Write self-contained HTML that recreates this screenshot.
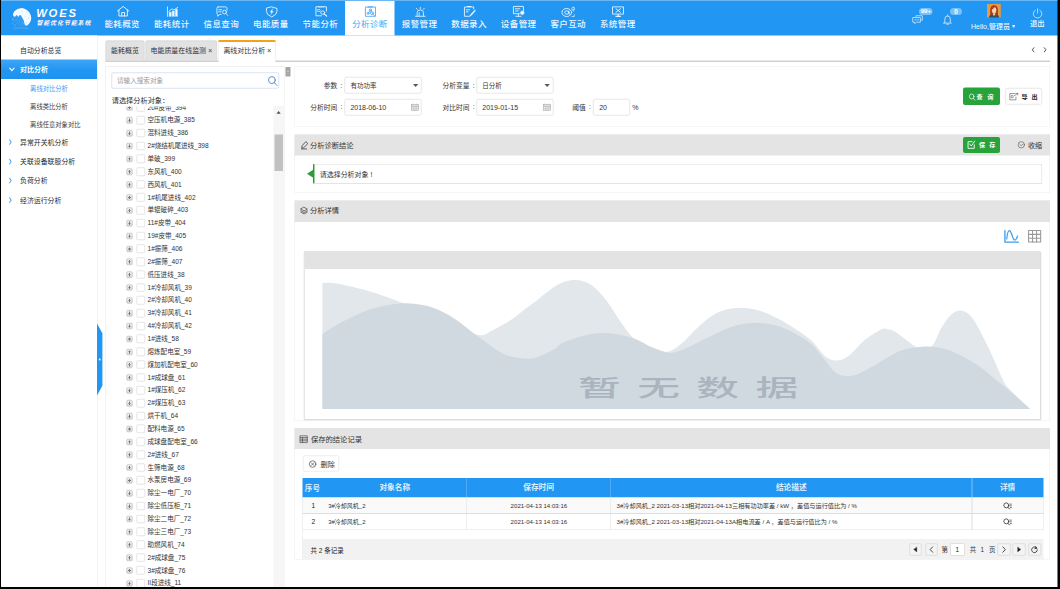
<!DOCTYPE html>
<html lang="zh-CN"><head><meta charset="utf-8"><title>WOES 智能优化节能系统</title>
<style>
html,body{margin:0;padding:0;width:1060px;height:589px;overflow:hidden;background:#fff;}
#root{position:absolute;left:0;top:0;width:2120px;height:1178px;transform:scale(0.5);transform-origin:0 0;overflow:hidden;background:#fff;font-family:"Liberation Sans","Noto Sans CJK SC",sans-serif;}
#root div,#root svg{position:absolute;}
#root svg{overflow:visible;display:block;}
.t{white-space:nowrap;}
</style></head><body>
<div id="root">
<div style="left:0px;top:0px;width:2120px;height:70.6px;background:#2196f3;"></div>
<div style="left:0px;top:0px;width:2120px;height:1.8px;background:#6ab7f5;"></div>
<svg style="left:16px;top:8px;width:60px;height:56px;" viewBox="0 0 631 589" preserveAspectRatio="none"><path d="M105 232 Q108 190 135 155 Q190 92 290 82 Q385 92 450 178 Q492 240 490 300 Q486 370 440 420 Q410 452 378 456 Q352 448 346 410 Q338 360 322 328 Q300 290 272 242 Q255 228 240 236 L216 272 L196 240 Q184 230 172 238 L150 266 Q132 270 120 258 Z" fill="#fff" opacity=".96"/>
<path d="M100 300 Q96 330 104 350 M88 400 Q120 440 165 462 M300 380 L320 410" stroke="#fff" stroke-opacity=".35" stroke-width="14" fill="none" stroke-linecap="round"/>
<path d="M105 505 Q270 470 440 505 M130 525 Q280 500 420 522" stroke="#fff" stroke-opacity=".22" stroke-width="12" fill="none" stroke-linecap="round"/>
<circle cx="292" cy="272" r="192" fill="#fff" opacity=".06"/>
<g fill="#2196f3" opacity=".16"><circle cx="400" cy="170" r="16"/><circle cx="430" cy="300" r="20"/><circle cx="300" cy="160" r="14"/><circle cx="395" cy="390" r="16"/><circle cx="210" cy="170" r="12"/><circle cx="355" cy="260" r="12"/></g></svg>
<div class="t" style="left:72.4px;top:8.32px;height:36.16px;line-height:36.16px;font-size:22.6px;color:#fff;font-weight:bold;font-style:italic;letter-spacing:3.5px;text-shadow:0.6px 0.8px 1px rgba(120,80,200,.45);">WOES</div>
<div class="t" style="left:72.8px;top:37.2px;height:19.2px;line-height:19.2px;font-size:12px;color:#fff;font-weight:bold;font-style:italic;letter-spacing:1.72px;text-shadow:0.4px 0.6px 0.8px rgba(120,60,200,.55);">智能优化节能系统</div>
<svg style="left:234px;top:12.4px;width:24.6px;height:20.8px;color:#fff;opacity:.93;" viewBox="1.75 2.25 20.5 19.0" preserveAspectRatio="none"><g fill="none" stroke="currentColor" stroke-width="1.6" stroke-linecap="round" stroke-linejoin="round"><path d="M2.5 11.5 L12 3 L21.5 11.5 M5 9.6 V20.5 H19 V9.6 M9.6 20.5 V14.2 H14.4 V20.5" /></g></svg>
<div class="t" style="left:-155.64px;width:800px;text-align:center;top:35px;height:27.2px;line-height:27.2px;font-size:17px;color:#fff;font-weight:500;letter-spacing:0.8px;opacity:.93;">能耗概览</div>
<svg style="left:334px;top:13px;width:22.6px;height:20.2px;color:#fff;opacity:.93;" viewBox="1.75 0.75 19.5 20.75" preserveAspectRatio="none"><g fill="none" stroke="currentColor" stroke-width="1.6" stroke-linecap="round" stroke-linejoin="round"><path d="M2.5 1.5 V21" /><path d="M5.5 21 V12.5 H9 V21 Z M10.8 21 V10 H14.3 V21 Z M16.2 21 V6.5 H19.7 V21 Z" fill="currentColor" stroke-width=".8"/><path d="M5 10.5 L10.5 5.5 L13.5 8 L20.5 2.5" /></g></svg>
<div class="t" style="left:-56.52px;width:800px;text-align:center;top:35px;height:27.2px;line-height:27.2px;font-size:17px;color:#fff;font-weight:500;letter-spacing:0.8px;opacity:.93;">能耗统计</div>
<svg style="left:432.6px;top:13px;width:23.4px;height:20.2px;color:#fff;opacity:.93;" viewBox="1.25 1.75 21.5 19.5" preserveAspectRatio="none"><g fill="none" stroke="currentColor" stroke-width="1.6" stroke-linecap="round" stroke-linejoin="round"><path d="M4 2.5 H18 Q20.5 2.5 20.5 5 V9 M10 17 H7.5 L3.5 20.5 V17 Q2 16.5 2 14.5 V5 Q2 2.5 4.5 2.5" /><path d="M5.5 8 H11 M5.5 12 H9.5" /><circle cx="16" cy="12.5" r="3.6"/><path d="M18.6 15.4 L22 19.2" /></g></svg>
<div class="t" style="left:42.6px;width:800px;text-align:center;top:35px;height:27.2px;line-height:27.2px;font-size:17px;color:#fff;font-weight:500;letter-spacing:0.8px;opacity:.93;">信息查询</div>
<svg style="left:531.8px;top:13px;width:22.8px;height:21.6px;color:#fff;opacity:.93;" viewBox="2.25 1.25 19.5 21.0" preserveAspectRatio="none"><g fill="none" stroke="currentColor" stroke-width="1.6" stroke-linecap="round" stroke-linejoin="round"><path d="M12 2 L21 5 V11 Q21 17.5 12 21.5 Q3 17.5 3 11 V5 Z" /><path d="M13.6 5.8 L9.2 12.2 H12 L10.6 17 L15 10.6 H12.2 Z" fill="currentColor" stroke-width=".5"/></g></svg>
<div class="t" style="left:141.72px;width:800px;text-align:center;top:35px;height:27.2px;line-height:27.2px;font-size:17px;color:#fff;font-weight:500;letter-spacing:0.8px;opacity:.93;">电能质量</div>
<svg style="left:630.6px;top:12.4px;width:23.6px;height:21.4px;color:#fff;opacity:.93;" viewBox="2.25 1 20.25 21.3" preserveAspectRatio="none"><g fill="none" stroke="currentColor" stroke-width="1.6" stroke-linecap="round" stroke-linejoin="round"><path d="M8 2.5 H3 V20.5 H12.5 M16 2.5 H21 V11" /><path d="M8 1.8 H16 V3.6 H8 Z" fill="currentColor" stroke-width=".6"/><path d="M6 8 H10 V12 H6 Z" stroke-width="1.1"/><circle cx="14.6" cy="14.2" r="3.4"/><path d="M17 16.8 L21.5 21.3" stroke-width="2"/></g></svg>
<div class="t" style="left:240.84px;width:800px;text-align:center;top:35px;height:27.2px;line-height:27.2px;font-size:17px;color:#fff;font-weight:500;letter-spacing:0.8px;opacity:.93;">节能分析</div>
<div style="left:690.2px;top:1.8px;width:99.12px;height:69.4px;background:#fff;"></div>
<svg style="left:730px;top:12.4px;width:21.8px;height:21.4px;color:#45a6f5;" viewBox="2.25 1 19.5 20.25" preserveAspectRatio="none"><g fill="none" stroke="currentColor" stroke-width="1.6" stroke-linecap="round" stroke-linejoin="round"><path d="M8 3 H3 V20.5 H21 V3 H16" /><path d="M8 1.8 H16 V4 H8 Z" fill="currentColor" stroke-width=".6"/><circle cx="12" cy="8.6" r="1.9"/><circle cx="7.6" cy="15" r="1.7"/><circle cx="14.6" cy="14.6" r="2.6"/><path d="M10.8 10.2 L8.6 13.6 M12.8 10.4 L13.8 12.2 M16.5 16.6 L19.5 19.6" /></g></svg>
<div class="t" style="left:339.96px;width:800px;text-align:center;top:35px;height:27.2px;line-height:27.2px;font-size:17px;color:#45a6f5;font-weight:400;letter-spacing:0.8px;">分析诊断</div>
<svg style="left:829.6px;top:14px;width:21.2px;height:19.2px;color:#fff;opacity:.93;" viewBox="2.75 0.5 18.5 21.0" preserveAspectRatio="none"><g fill="none" stroke="currentColor" stroke-width="1.6" stroke-linecap="round" stroke-linejoin="round"><path d="M6.5 20.5 V12.5 Q6.5 7 12 7 Q17.5 7 17.5 12.5 V20.5 M3.5 20.8 H20.5 M12 1.2 V4.2 M5 3.2 L7 5.8 M19 3.2 L17 5.8" /><path d="M10 20.5 V13" /></g></svg>
<div class="t" style="left:439.08px;width:800px;text-align:center;top:35px;height:27.2px;line-height:27.2px;font-size:17px;color:#fff;font-weight:500;letter-spacing:0.8px;opacity:.93;">报警管理</div>
<svg style="left:928px;top:12.4px;width:23.8px;height:21.4px;color:#fff;opacity:.93;" viewBox="2.75 0.6 20.45 20.7" preserveAspectRatio="none"><g fill="none" stroke="currentColor" stroke-width="1.6" stroke-linecap="round" stroke-linejoin="round"><path d="M19.5 6.5 V2.5 H3.5 V20.5 H12" /><path d="M9 1.6 H14.5" stroke-width="2"/><path d="M6.5 8 H12.5 M6.5 12 H10" /><path d="M21.2 8.2 L13.6 17.6 L12.2 20.6 L15.2 19.2 L22.6 9.6 Z" fill="currentColor" stroke-width=".6"/></g></svg>
<div class="t" style="left:538.2px;width:800px;text-align:center;top:35px;height:27.2px;line-height:27.2px;font-size:17px;color:#fff;font-weight:500;letter-spacing:0.8px;opacity:.93;">数据录入</div>
<svg style="left:1026.4px;top:12.4px;width:23.4px;height:21.4px;color:#fff;opacity:.93;" viewBox="2.25 1.75 20.95 19.75" preserveAspectRatio="none"><g fill="none" stroke="currentColor" stroke-width="1.6" stroke-linecap="round" stroke-linejoin="round"><path d="M21 11 V2.5 H3 V16 H13.5 M12 16 V20.5 M7.5 20.8 H16.5" /><path d="M6.5 7 H14.5 M6.5 11 H11.5" /><circle cx="18.8" cy="14.4" r="2.6" fill="currentColor"/><path d="M18.8 10.6 V18.2 M15 14.4 H22.6 M16.2 11.8 L21.4 17 M21.4 11.8 L16.2 17" stroke-width="1"/></g></svg>
<div class="t" style="left:637.32px;width:800px;text-align:center;top:35px;height:27.2px;line-height:27.2px;font-size:17px;color:#fff;font-weight:500;letter-spacing:0.8px;opacity:.93;">设备管理</div>
<svg style="left:1122.6px;top:13px;width:26.8px;height:20.8px;color:#fff;opacity:.93;" viewBox="0.75 0.6 22.15 20.7" preserveAspectRatio="none"><g fill="none" stroke="currentColor" stroke-width="1.6" stroke-linecap="round" stroke-linejoin="round"><circle cx="9.5" cy="12.5" r="8" /><circle cx="9.5" cy="12.5" r="3.4" /><path d="M12.9 9.4 V14 Q12.9 16 14.8 16" /><path d="M18.6 3 H22.2 V7.4 H18.6 Z M20.4 1.2 V3 M20.4 7.4 V10.2" stroke-width="1.1"/><path d="M18.2 20.5 H21.8 V16.6" stroke-width="1.2"/></g></svg>
<div class="t" style="left:736.44px;width:800px;text-align:center;top:35px;height:27.2px;line-height:27.2px;font-size:17px;color:#fff;font-weight:500;letter-spacing:0.8px;opacity:.93;">客户互动</div>
<svg style="left:1225.2px;top:13px;width:22.8px;height:20.8px;color:#fff;opacity:.93;" viewBox="1.75 1.75 20.5 20.15" preserveAspectRatio="none"><g fill="none" stroke="currentColor" stroke-width="1.6" stroke-linecap="round" stroke-linejoin="round"><path d="M2.5 2.5 H21.5 V16.5 H2.5 Z M12 16.5 V20.2 M7.5 20.8 H16.5" /><path d="M8 6 L16 13 M16 6 L8 13" stroke-width="1.7"/><path d="M9.5 20.8 H14.5" stroke-width="2.2"/></g></svg>
<div class="t" style="left:835.56px;width:800px;text-align:center;top:35px;height:27.2px;line-height:27.2px;font-size:17px;color:#fff;font-weight:500;letter-spacing:0.8px;opacity:.93;">系统管理</div>
<svg style="left:1825px;top:29.4px;width:21px;height:19.4px;color:#fff;opacity:.9;" viewBox="0 0 24 24" preserveAspectRatio="none"><g fill="none" stroke="currentColor" stroke-width="1.7" stroke-linecap="round" stroke-linejoin="round"><path d="M8 5 V3 H22.5 V14 H19.5"/><path d="M1.5 7.5 H18 V19 H9 L5 22.5 V19 H1.5 Z"/><path d="M6 13.2 H7 M9.5 13.2 H10.5 M13 13.2 H14"/></g></svg>
<div style="left:1838.4px;top:16.2px;width:26.6px;height:13.4px;background:#7dbff7;border-radius:7.2px;"></div>
<div class="t" style="left:1451.8px;width:800px;text-align:center;top:13.08px;height:19.84px;line-height:19.84px;font-size:12.4px;color:#fff;font-weight:bold;">99+</div>
<svg style="left:1884.6px;top:27.6px;width:20.4px;height:21.8px;color:#fff;opacity:.9;" viewBox="0 0 24 24" preserveAspectRatio="none"><g fill="none" stroke="currentColor" stroke-width="1.7" stroke-linecap="round" stroke-linejoin="round"><path d="M12 2 V4 M5.5 18 V11 Q5.5 4.5 12 4.5 Q18.5 4.5 18.5 11 V18 L21 20 H3 Z M9.8 22.5 H14.2"/></g></svg>
<div style="left:1899.6px;top:16.2px;width:24.8px;height:13.4px;background:#7dbff7;border-radius:7.2px;"></div>
<div class="t" style="left:1512px;width:800px;text-align:center;top:12.92px;height:20.16px;line-height:20.16px;font-size:12.6px;color:#fff;font-weight:bold;">0</div>
<svg style="left:1974.2px;top:7.6px;width:27.4px;height:27px;border-radius:1.6px;" viewBox="0 0 30 28" preserveAspectRatio="none"><rect width="30" height="28" fill="#e6a650"/><rect x="0" y="0" width="30" height="28" fill="#d98a2b" opacity=".35"/>
<path d="M7 28 V13 Q7 2.5 15.5 2.5 Q24 2.5 24 13 V28 Z" fill="#b23a1c"/>
<path d="M10.5 12 Q10.5 6.5 15.5 7 Q20.5 6.5 20.5 12 Q20.5 19.5 15.5 20 Q10.5 19.5 10.5 12Z" fill="#f6d3ad"/>
<path d="M9.5 12.5 Q10 6 16 6.5 Q14 10 9.5 12.5Z" fill="#a83218"/>
<path d="M4 28 Q5 22.5 12 22 L15.5 24 L19 22 Q26 22.5 27 28Z" fill="#3f4f63"/>
<path d="M13 19.5 H18 V23 L15.5 24.5 L13 23Z" fill="#f0c79d"/></svg>
<div class="t" style="left:1942px;top:41px;height:22.4px;line-height:22.4px;font-size:14px;color:#fff;font-weight:500;opacity:.95;white-space:nowrap;">Hello,管理员 <span style="font-size:11px;vertical-align:0.6px">▾</span></div>
<svg style="left:2064.4px;top:16.4px;width:22.2px;height:21.8px;color:#fff;opacity:.95;" viewBox="0 0 24 24" preserveAspectRatio="none"><g fill="none" stroke="currentColor" stroke-width="1.5" stroke-linecap="round" stroke-linejoin="round"><path d="M12 1.8 V11.5"/><path d="M7.3 4.6 A9.3 9.3 0 1 0 16.7 4.6"/></g></svg>
<div class="t" style="left:1674.4px;width:800px;text-align:center;top:34.92px;height:23.36px;line-height:23.36px;font-size:14.6px;color:#fff;font-weight:500;opacity:.95;">退出</div>
<div style="left:0px;top:70.6px;width:194.4px;height:1107.4px;background:#fff;"></div>
<div style="left:194px;top:70.6px;width:1px;height:1107.4px;background:#e4e4e4;"></div>
<div class="t" style="left:40px;top:89.56px;height:22.08px;line-height:22.08px;font-size:13.8px;color:#2b2b2b;">自动分析总览</div>
<div style="left:0px;top:118.6px;width:194.4px;height:39.2px;background:linear-gradient(#3fa5f6,#2196f3 55%,#1e92ef);"></div>
<svg style="left:18.4px;top:133px;width:11.6px;height:11.6px;color:#fff;" viewBox="0 0 24 24" preserveAspectRatio="none"><g fill="none" stroke="currentColor" stroke-width="4.6" stroke-linecap="round" stroke-linejoin="round"><path d="M3 7 L12 17 L21 7"/></g></svg>
<div class="t" style="left:40px;top:127.2px;height:22.4px;line-height:22.4px;font-size:14px;color:#fff;font-weight:bold;">对比分析</div>
<div class="t" style="left:60.2px;top:166.72px;height:20.16px;line-height:20.16px;font-size:12.6px;color:#3a9cf0;">离线对比分析</div>
<div class="t" style="left:60.2px;top:202.52px;height:20.16px;line-height:20.16px;font-size:12.6px;color:#3c3c3c;">离线类比分析</div>
<div class="t" style="left:60.2px;top:239.52px;height:20.16px;line-height:20.16px;font-size:12.6px;color:#3c3c3c;">离线任意对象对比</div>
<svg style="left:17.2px;top:278.4px;width:7.6px;height:12.4px;color:#2f98f2;" viewBox="0 0 24 24" preserveAspectRatio="none"><g fill="none" stroke="currentColor" stroke-width="4.4" stroke-linecap="round" stroke-linejoin="round"><path d="M7 3 L17 12 L7 21"/></g></svg>
<div class="t" style="left:40px;top:273.96px;height:22.08px;line-height:22.08px;font-size:13.8px;color:#2b2b2b;">异常开关机分析</div>
<svg style="left:17.2px;top:316.8px;width:7.6px;height:12.4px;color:#2f98f2;" viewBox="0 0 24 24" preserveAspectRatio="none"><g fill="none" stroke="currentColor" stroke-width="4.4" stroke-linecap="round" stroke-linejoin="round"><path d="M7 3 L17 12 L7 21"/></g></svg>
<div class="t" style="left:40px;top:312.36px;height:22.08px;line-height:22.08px;font-size:13.8px;color:#2b2b2b;">关联设备联股分析</div>
<svg style="left:17.2px;top:355px;width:7.6px;height:12.4px;color:#2f98f2;" viewBox="0 0 24 24" preserveAspectRatio="none"><g fill="none" stroke="currentColor" stroke-width="4.4" stroke-linecap="round" stroke-linejoin="round"><path d="M7 3 L17 12 L7 21"/></g></svg>
<div class="t" style="left:40px;top:350.56px;height:22.08px;line-height:22.08px;font-size:13.8px;color:#2b2b2b;">负荷分析</div>
<svg style="left:17.2px;top:394.4px;width:7.6px;height:12.4px;color:#2f98f2;" viewBox="0 0 24 24" preserveAspectRatio="none"><g fill="none" stroke="currentColor" stroke-width="4.4" stroke-linecap="round" stroke-linejoin="round"><path d="M7 3 L17 12 L7 21"/></g></svg>
<div class="t" style="left:40px;top:389.96px;height:22.08px;line-height:22.08px;font-size:13.8px;color:#2b2b2b;">经济运行分析</div>
<svg style="left:194.4px;top:647px;width:10.8px;height:144px;" viewBox="0 0 10 132" preserveAspectRatio="none"><path d="M0 0 L10 18 V114 L0 132Z" fill="#2196f3"/><circle cx="5" cy="66" r="1.8" fill="#fff"/></svg>
<div style="left:210.8px;top:120.6px;width:1888.8px;height:3.2px;background:#d0d0d0;"></div>
<div style="left:211.2px;top:80.6px;width:78px;height:42px;background:#e2e2e2;border:1.1px solid #c9c9c9;border-radius:3.2px 3.2px 0 0;box-sizing:border-box;"></div>
<div class="t" style="left:222.2px;top:90.28px;height:22.24px;line-height:22.24px;font-size:13.9px;color:#333;">能耗概览</div>
<div style="left:290.6px;top:80.6px;width:143.4px;height:42px;background:#e2e2e2;border:1.1px solid #c9c9c9;border-radius:3.2px 3.2px 0 0;box-sizing:border-box;"></div>
<div class="t" style="left:301px;top:90.28px;height:22.24px;line-height:22.24px;font-size:13.9px;color:#333;">电能质量在线监测</div>
<div class="t" style="left:416.4px;top:91.24px;height:21.12px;line-height:21.12px;font-size:13.2px;color:#666;font-weight:bold;">×</div>
<div style="left:435.8px;top:79.8px;width:115.8px;height:44.4px;background:#fff;border:1.1px solid #c8c8c8;border-bottom:none;border-top:4px solid #f5a21b;border-radius:3.2px 3.2px 0 0;box-sizing:border-box;"></div>
<div class="t" style="left:446.8px;top:90.28px;height:22.24px;line-height:22.24px;font-size:13.9px;color:#333;">离线对比分析</div>
<div class="t" style="left:534.4px;top:91.24px;height:21.12px;line-height:21.12px;font-size:13.2px;color:#666;font-weight:bold;">×</div>
<svg style="left:2062.4px;top:94px;width:8.4px;height:11.2px;color:#333;" viewBox="0 0 24 24" preserveAspectRatio="none"><g fill="none" stroke="currentColor" stroke-width="4.2" stroke-linecap="round" stroke-linejoin="round"><path d="M17 3 L7 12 L17 21"/></g></svg>
<svg style="left:2085.6px;top:94px;width:8.4px;height:11.2px;color:#333;" viewBox="0 0 24 24" preserveAspectRatio="none"><g fill="none" stroke="currentColor" stroke-width="4.2" stroke-linecap="round" stroke-linejoin="round"><path d="M7 3 L17 12 L7 21"/></g></svg>
<div style="left:210.6px;top:133px;width:357.8px;height:1045px;background:#fff;border-left:1.1px solid #e3e3e3;border-top:1.1px solid #e3e3e3;box-sizing:border-box;"></div>
<div style="left:223.4px;top:144.6px;width:334.4px;height:32.8px;border:1.1px solid #b9c9e0;border-radius:3.2px;box-sizing:border-box;background:#fff;"></div>
<div class="t" style="left:234px;top:151.04px;height:21.12px;line-height:21.12px;font-size:13.2px;color:#9a9a9a;">请输入搜索对象</div>
<svg style="left:535.6px;top:151.6px;width:18.8px;height:19.8px;color:#5389c9;" viewBox="1.5 1.5 21.5 22" preserveAspectRatio="none"><g fill="none" stroke="currentColor" stroke-width="2.1" stroke-linecap="round" stroke-linejoin="round"><circle cx="10.5" cy="10.5" r="7.8"/><path d="M16.2 16.6 L22 22.5"/></g></svg>
<div class="t" style="left:223.4px;top:190.28px;height:23.04px;line-height:23.04px;font-size:14.4px;color:#2b2b2b;">请选择分析对象：</div>
<div style="left:547.2px;top:212px;width:20.8px;height:966px;background:#f6f6f6;"></div>
<div style="left:568px;top:133px;width:1.2px;height:1045px;background:#ebebeb;"></div>
<svg style="left:553.2px;top:221.6px;width:8.4px;height:5.6px;" viewBox="0 0 10 6" preserveAspectRatio="none"><path d="M0 6 L5 0 L10 6Z" fill="#505050"/></svg>
<div style="left:548.8px;top:269.2px;width:17.6px;height:72.4px;background:#c1c1c1;"></div>
<div style="left:571px;top:134px;width:9.6px;height:19.4px;background:#a6a6a6;"></div>
<div style="left:573.8px;top:143px;width:4px;height:1.4px;background:#e8e8e8;"></div>
<div style="left:210.6px;top:212.6px;width:336.6px;height:965.4px;overflow:hidden;"><div style="left:42.2px;top:-3.82px;width:12.4px;height:12.4px;border:1.2px solid #9a9a9a;border-radius:2.6px;box-sizing:border-box;background:linear-gradient(#f4f4f4,#dcdcdc);"></div>
<div style="left:45.2px;top:1.78px;width:6.4px;height:1.2px;background:#777;"></div>
<div style="left:47.8px;top:-0.82px;width:1.2px;height:6.4px;background:#777;"></div>
<div style="left:62.4px;top:-6.22px;width:16.8px;height:16.6px;border:1.2px solid #cdcdcd;border-radius:2px;box-sizing:border-box;background:#fff;"></div>
<div class="t" style="left:84.4px;top:-8.1px;height:20.96px;line-height:20.96px;font-size:13.1px;color:#333;">20#皮带_394</div>
<div style="left:42.2px;top:21.9px;width:12.4px;height:12.4px;border:1.2px solid #9a9a9a;border-radius:2.6px;box-sizing:border-box;background:linear-gradient(#f4f4f4,#dcdcdc);"></div>
<div style="left:45.2px;top:27.5px;width:6.4px;height:1.2px;background:#777;"></div>
<div style="left:47.8px;top:24.9px;width:1.2px;height:6.4px;background:#777;"></div>
<div style="left:62.4px;top:19.5px;width:16.8px;height:16.6px;border:1.2px solid #cdcdcd;border-radius:2px;box-sizing:border-box;background:#fff;"></div>
<div class="t" style="left:84.4px;top:17.62px;height:20.96px;line-height:20.96px;font-size:13.1px;color:#333;">空压机电源_385</div>
<div style="left:42.2px;top:47.62px;width:12.4px;height:12.4px;border:1.2px solid #9a9a9a;border-radius:2.6px;box-sizing:border-box;background:linear-gradient(#f4f4f4,#dcdcdc);"></div>
<div style="left:45.2px;top:53.22px;width:6.4px;height:1.2px;background:#777;"></div>
<div style="left:47.8px;top:50.62px;width:1.2px;height:6.4px;background:#777;"></div>
<div style="left:62.4px;top:45.22px;width:16.8px;height:16.6px;border:1.2px solid #cdcdcd;border-radius:2px;box-sizing:border-box;background:#fff;"></div>
<div class="t" style="left:84.4px;top:43.34px;height:20.96px;line-height:20.96px;font-size:13.1px;color:#333;">混料进线_386</div>
<div style="left:42.2px;top:73.35px;width:12.4px;height:12.4px;border:1.2px solid #9a9a9a;border-radius:2.6px;box-sizing:border-box;background:linear-gradient(#f4f4f4,#dcdcdc);"></div>
<div style="left:45.2px;top:78.95px;width:6.4px;height:1.2px;background:#777;"></div>
<div style="left:47.8px;top:76.35px;width:1.2px;height:6.4px;background:#777;"></div>
<div style="left:62.4px;top:70.95px;width:16.8px;height:16.6px;border:1.2px solid #cdcdcd;border-radius:2px;box-sizing:border-box;background:#fff;"></div>
<div class="t" style="left:84.4px;top:69.07px;height:20.96px;line-height:20.96px;font-size:13.1px;color:#333;">2#烧结机尾进线_398</div>
<div style="left:42.2px;top:99.07px;width:12.4px;height:12.4px;border:1.2px solid #9a9a9a;border-radius:2.6px;box-sizing:border-box;background:linear-gradient(#f4f4f4,#dcdcdc);"></div>
<div style="left:45.2px;top:104.67px;width:6.4px;height:1.2px;background:#777;"></div>
<div style="left:47.8px;top:102.07px;width:1.2px;height:6.4px;background:#777;"></div>
<div style="left:62.4px;top:96.67px;width:16.8px;height:16.6px;border:1.2px solid #cdcdcd;border-radius:2px;box-sizing:border-box;background:#fff;"></div>
<div class="t" style="left:84.4px;top:94.79px;height:20.96px;line-height:20.96px;font-size:13.1px;color:#333;">单破_399</div>
<div style="left:42.2px;top:124.8px;width:12.4px;height:12.4px;border:1.2px solid #9a9a9a;border-radius:2.6px;box-sizing:border-box;background:linear-gradient(#f4f4f4,#dcdcdc);"></div>
<div style="left:45.2px;top:130.4px;width:6.4px;height:1.2px;background:#777;"></div>
<div style="left:47.8px;top:127.8px;width:1.2px;height:6.4px;background:#777;"></div>
<div style="left:62.4px;top:122.4px;width:16.8px;height:16.6px;border:1.2px solid #cdcdcd;border-radius:2px;box-sizing:border-box;background:#fff;"></div>
<div class="t" style="left:84.4px;top:120.52px;height:20.96px;line-height:20.96px;font-size:13.1px;color:#333;">东风机_400</div>
<div style="left:42.2px;top:150.52px;width:12.4px;height:12.4px;border:1.2px solid #9a9a9a;border-radius:2.6px;box-sizing:border-box;background:linear-gradient(#f4f4f4,#dcdcdc);"></div>
<div style="left:45.2px;top:156.12px;width:6.4px;height:1.2px;background:#777;"></div>
<div style="left:47.8px;top:153.52px;width:1.2px;height:6.4px;background:#777;"></div>
<div style="left:62.4px;top:148.12px;width:16.8px;height:16.6px;border:1.2px solid #cdcdcd;border-radius:2px;box-sizing:border-box;background:#fff;"></div>
<div class="t" style="left:84.4px;top:146.24px;height:20.96px;line-height:20.96px;font-size:13.1px;color:#333;">西风机_401</div>
<div style="left:42.2px;top:176.24px;width:12.4px;height:12.4px;border:1.2px solid #9a9a9a;border-radius:2.6px;box-sizing:border-box;background:linear-gradient(#f4f4f4,#dcdcdc);"></div>
<div style="left:45.2px;top:181.84px;width:6.4px;height:1.2px;background:#777;"></div>
<div style="left:47.8px;top:179.24px;width:1.2px;height:6.4px;background:#777;"></div>
<div style="left:62.4px;top:173.84px;width:16.8px;height:16.6px;border:1.2px solid #cdcdcd;border-radius:2px;box-sizing:border-box;background:#fff;"></div>
<div class="t" style="left:84.4px;top:171.96px;height:20.96px;line-height:20.96px;font-size:13.1px;color:#333;">1#机尾进线_402</div>
<div style="left:42.2px;top:201.97px;width:12.4px;height:12.4px;border:1.2px solid #9a9a9a;border-radius:2.6px;box-sizing:border-box;background:linear-gradient(#f4f4f4,#dcdcdc);"></div>
<div style="left:45.2px;top:207.57px;width:6.4px;height:1.2px;background:#777;"></div>
<div style="left:47.8px;top:204.97px;width:1.2px;height:6.4px;background:#777;"></div>
<div style="left:62.4px;top:199.57px;width:16.8px;height:16.6px;border:1.2px solid #cdcdcd;border-radius:2px;box-sizing:border-box;background:#fff;"></div>
<div class="t" style="left:84.4px;top:197.69px;height:20.96px;line-height:20.96px;font-size:13.1px;color:#333;">单辊破碎_403</div>
<div style="left:42.2px;top:227.69px;width:12.4px;height:12.4px;border:1.2px solid #9a9a9a;border-radius:2.6px;box-sizing:border-box;background:linear-gradient(#f4f4f4,#dcdcdc);"></div>
<div style="left:45.2px;top:233.29px;width:6.4px;height:1.2px;background:#777;"></div>
<div style="left:47.8px;top:230.69px;width:1.2px;height:6.4px;background:#777;"></div>
<div style="left:62.4px;top:225.29px;width:16.8px;height:16.6px;border:1.2px solid #cdcdcd;border-radius:2px;box-sizing:border-box;background:#fff;"></div>
<div class="t" style="left:84.4px;top:223.41px;height:20.96px;line-height:20.96px;font-size:13.1px;color:#333;">11#皮带_404</div>
<div style="left:42.2px;top:253.42px;width:12.4px;height:12.4px;border:1.2px solid #9a9a9a;border-radius:2.6px;box-sizing:border-box;background:linear-gradient(#f4f4f4,#dcdcdc);"></div>
<div style="left:45.2px;top:259.02px;width:6.4px;height:1.2px;background:#777;"></div>
<div style="left:47.8px;top:256.42px;width:1.2px;height:6.4px;background:#777;"></div>
<div style="left:62.4px;top:251.02px;width:16.8px;height:16.6px;border:1.2px solid #cdcdcd;border-radius:2px;box-sizing:border-box;background:#fff;"></div>
<div class="t" style="left:84.4px;top:249.14px;height:20.96px;line-height:20.96px;font-size:13.1px;color:#333;">19#皮带_405</div>
<div style="left:42.2px;top:279.14px;width:12.4px;height:12.4px;border:1.2px solid #9a9a9a;border-radius:2.6px;box-sizing:border-box;background:linear-gradient(#f4f4f4,#dcdcdc);"></div>
<div style="left:45.2px;top:284.74px;width:6.4px;height:1.2px;background:#777;"></div>
<div style="left:47.8px;top:282.14px;width:1.2px;height:6.4px;background:#777;"></div>
<div style="left:62.4px;top:276.74px;width:16.8px;height:16.6px;border:1.2px solid #cdcdcd;border-radius:2px;box-sizing:border-box;background:#fff;"></div>
<div class="t" style="left:84.4px;top:274.86px;height:20.96px;line-height:20.96px;font-size:13.1px;color:#333;">1#振筛_406</div>
<div style="left:42.2px;top:304.86px;width:12.4px;height:12.4px;border:1.2px solid #9a9a9a;border-radius:2.6px;box-sizing:border-box;background:linear-gradient(#f4f4f4,#dcdcdc);"></div>
<div style="left:45.2px;top:310.46px;width:6.4px;height:1.2px;background:#777;"></div>
<div style="left:47.8px;top:307.86px;width:1.2px;height:6.4px;background:#777;"></div>
<div style="left:62.4px;top:302.46px;width:16.8px;height:16.6px;border:1.2px solid #cdcdcd;border-radius:2px;box-sizing:border-box;background:#fff;"></div>
<div class="t" style="left:84.4px;top:300.58px;height:20.96px;line-height:20.96px;font-size:13.1px;color:#333;">2#振筛_407</div>
<div style="left:42.2px;top:330.59px;width:12.4px;height:12.4px;border:1.2px solid #9a9a9a;border-radius:2.6px;box-sizing:border-box;background:linear-gradient(#f4f4f4,#dcdcdc);"></div>
<div style="left:45.2px;top:336.19px;width:6.4px;height:1.2px;background:#777;"></div>
<div style="left:47.8px;top:333.59px;width:1.2px;height:6.4px;background:#777;"></div>
<div style="left:62.4px;top:328.19px;width:16.8px;height:16.6px;border:1.2px solid #cdcdcd;border-radius:2px;box-sizing:border-box;background:#fff;"></div>
<div class="t" style="left:84.4px;top:326.31px;height:20.96px;line-height:20.96px;font-size:13.1px;color:#333;">低压进线_38</div>
<div style="left:42.2px;top:356.31px;width:12.4px;height:12.4px;border:1.2px solid #9a9a9a;border-radius:2.6px;box-sizing:border-box;background:linear-gradient(#f4f4f4,#dcdcdc);"></div>
<div style="left:45.2px;top:361.91px;width:6.4px;height:1.2px;background:#777;"></div>
<div style="left:47.8px;top:359.31px;width:1.2px;height:6.4px;background:#777;"></div>
<div style="left:62.4px;top:353.91px;width:16.8px;height:16.6px;border:1.2px solid #cdcdcd;border-radius:2px;box-sizing:border-box;background:#fff;"></div>
<div class="t" style="left:84.4px;top:352.03px;height:20.96px;line-height:20.96px;font-size:13.1px;color:#333;">1#冷却风机_39</div>
<div style="left:42.2px;top:382.04px;width:12.4px;height:12.4px;border:1.2px solid #9a9a9a;border-radius:2.6px;box-sizing:border-box;background:linear-gradient(#f4f4f4,#dcdcdc);"></div>
<div style="left:45.2px;top:387.64px;width:6.4px;height:1.2px;background:#777;"></div>
<div style="left:47.8px;top:385.04px;width:1.2px;height:6.4px;background:#777;"></div>
<div style="left:62.4px;top:379.64px;width:16.8px;height:16.6px;border:1.2px solid #cdcdcd;border-radius:2px;box-sizing:border-box;background:#fff;"></div>
<div class="t" style="left:84.4px;top:377.76px;height:20.96px;line-height:20.96px;font-size:13.1px;color:#333;">2#冷却风机_40</div>
<div style="left:42.2px;top:407.76px;width:12.4px;height:12.4px;border:1.2px solid #9a9a9a;border-radius:2.6px;box-sizing:border-box;background:linear-gradient(#f4f4f4,#dcdcdc);"></div>
<div style="left:45.2px;top:413.36px;width:6.4px;height:1.2px;background:#777;"></div>
<div style="left:47.8px;top:410.76px;width:1.2px;height:6.4px;background:#777;"></div>
<div style="left:62.4px;top:405.36px;width:16.8px;height:16.6px;border:1.2px solid #cdcdcd;border-radius:2px;box-sizing:border-box;background:#fff;"></div>
<div class="t" style="left:84.4px;top:403.48px;height:20.96px;line-height:20.96px;font-size:13.1px;color:#333;">3#冷却风机_41</div>
<div style="left:42.2px;top:433.48px;width:12.4px;height:12.4px;border:1.2px solid #9a9a9a;border-radius:2.6px;box-sizing:border-box;background:linear-gradient(#f4f4f4,#dcdcdc);"></div>
<div style="left:45.2px;top:439.08px;width:6.4px;height:1.2px;background:#777;"></div>
<div style="left:47.8px;top:436.48px;width:1.2px;height:6.4px;background:#777;"></div>
<div style="left:62.4px;top:431.08px;width:16.8px;height:16.6px;border:1.2px solid #cdcdcd;border-radius:2px;box-sizing:border-box;background:#fff;"></div>
<div class="t" style="left:84.4px;top:429.2px;height:20.96px;line-height:20.96px;font-size:13.1px;color:#333;">4#冷却风机_42</div>
<div style="left:42.2px;top:459.21px;width:12.4px;height:12.4px;border:1.2px solid #9a9a9a;border-radius:2.6px;box-sizing:border-box;background:linear-gradient(#f4f4f4,#dcdcdc);"></div>
<div style="left:45.2px;top:464.81px;width:6.4px;height:1.2px;background:#777;"></div>
<div style="left:47.8px;top:462.21px;width:1.2px;height:6.4px;background:#777;"></div>
<div style="left:62.4px;top:456.81px;width:16.8px;height:16.6px;border:1.2px solid #cdcdcd;border-radius:2px;box-sizing:border-box;background:#fff;"></div>
<div class="t" style="left:84.4px;top:454.93px;height:20.96px;line-height:20.96px;font-size:13.1px;color:#333;">1#进线_58</div>
<div style="left:42.2px;top:484.93px;width:12.4px;height:12.4px;border:1.2px solid #9a9a9a;border-radius:2.6px;box-sizing:border-box;background:linear-gradient(#f4f4f4,#dcdcdc);"></div>
<div style="left:45.2px;top:490.53px;width:6.4px;height:1.2px;background:#777;"></div>
<div style="left:47.8px;top:487.93px;width:1.2px;height:6.4px;background:#777;"></div>
<div style="left:62.4px;top:482.53px;width:16.8px;height:16.6px;border:1.2px solid #cdcdcd;border-radius:2px;box-sizing:border-box;background:#fff;"></div>
<div class="t" style="left:84.4px;top:480.65px;height:20.96px;line-height:20.96px;font-size:13.1px;color:#333;">熔炼配电室_59</div>
<div style="left:42.2px;top:510.66px;width:12.4px;height:12.4px;border:1.2px solid #9a9a9a;border-radius:2.6px;box-sizing:border-box;background:linear-gradient(#f4f4f4,#dcdcdc);"></div>
<div style="left:45.2px;top:516.26px;width:6.4px;height:1.2px;background:#777;"></div>
<div style="left:47.8px;top:513.66px;width:1.2px;height:6.4px;background:#777;"></div>
<div style="left:62.4px;top:508.26px;width:16.8px;height:16.6px;border:1.2px solid #cdcdcd;border-radius:2px;box-sizing:border-box;background:#fff;"></div>
<div class="t" style="left:84.4px;top:506.38px;height:20.96px;line-height:20.96px;font-size:13.1px;color:#333;">煤加机配电室_60</div>
<div style="left:42.2px;top:536.38px;width:12.4px;height:12.4px;border:1.2px solid #9a9a9a;border-radius:2.6px;box-sizing:border-box;background:linear-gradient(#f4f4f4,#dcdcdc);"></div>
<div style="left:45.2px;top:541.98px;width:6.4px;height:1.2px;background:#777;"></div>
<div style="left:47.8px;top:539.38px;width:1.2px;height:6.4px;background:#777;"></div>
<div style="left:62.4px;top:533.98px;width:16.8px;height:16.6px;border:1.2px solid #cdcdcd;border-radius:2px;box-sizing:border-box;background:#fff;"></div>
<div class="t" style="left:84.4px;top:532.1px;height:20.96px;line-height:20.96px;font-size:13.1px;color:#333;">1#成球盘_61</div>
<div style="left:42.2px;top:562.1px;width:12.4px;height:12.4px;border:1.2px solid #9a9a9a;border-radius:2.6px;box-sizing:border-box;background:linear-gradient(#f4f4f4,#dcdcdc);"></div>
<div style="left:45.2px;top:567.7px;width:6.4px;height:1.2px;background:#777;"></div>
<div style="left:47.8px;top:565.1px;width:1.2px;height:6.4px;background:#777;"></div>
<div style="left:62.4px;top:559.7px;width:16.8px;height:16.6px;border:1.2px solid #cdcdcd;border-radius:2px;box-sizing:border-box;background:#fff;"></div>
<div class="t" style="left:84.4px;top:557.82px;height:20.96px;line-height:20.96px;font-size:13.1px;color:#333;">1#煤压机_62</div>
<div style="left:42.2px;top:587.83px;width:12.4px;height:12.4px;border:1.2px solid #9a9a9a;border-radius:2.6px;box-sizing:border-box;background:linear-gradient(#f4f4f4,#dcdcdc);"></div>
<div style="left:45.2px;top:593.43px;width:6.4px;height:1.2px;background:#777;"></div>
<div style="left:47.8px;top:590.83px;width:1.2px;height:6.4px;background:#777;"></div>
<div style="left:62.4px;top:585.43px;width:16.8px;height:16.6px;border:1.2px solid #cdcdcd;border-radius:2px;box-sizing:border-box;background:#fff;"></div>
<div class="t" style="left:84.4px;top:583.55px;height:20.96px;line-height:20.96px;font-size:13.1px;color:#333;">2#煤压机_63</div>
<div style="left:42.2px;top:613.55px;width:12.4px;height:12.4px;border:1.2px solid #9a9a9a;border-radius:2.6px;box-sizing:border-box;background:linear-gradient(#f4f4f4,#dcdcdc);"></div>
<div style="left:45.2px;top:619.15px;width:6.4px;height:1.2px;background:#777;"></div>
<div style="left:47.8px;top:616.55px;width:1.2px;height:6.4px;background:#777;"></div>
<div style="left:62.4px;top:611.15px;width:16.8px;height:16.6px;border:1.2px solid #cdcdcd;border-radius:2px;box-sizing:border-box;background:#fff;"></div>
<div class="t" style="left:84.4px;top:609.27px;height:20.96px;line-height:20.96px;font-size:13.1px;color:#333;">烘干机_64</div>
<div style="left:42.2px;top:639.28px;width:12.4px;height:12.4px;border:1.2px solid #9a9a9a;border-radius:2.6px;box-sizing:border-box;background:linear-gradient(#f4f4f4,#dcdcdc);"></div>
<div style="left:45.2px;top:644.88px;width:6.4px;height:1.2px;background:#777;"></div>
<div style="left:47.8px;top:642.28px;width:1.2px;height:6.4px;background:#777;"></div>
<div style="left:62.4px;top:636.88px;width:16.8px;height:16.6px;border:1.2px solid #cdcdcd;border-radius:2px;box-sizing:border-box;background:#fff;"></div>
<div class="t" style="left:84.4px;top:635px;height:20.96px;line-height:20.96px;font-size:13.1px;color:#333;">配料电源_65</div>
<div style="left:42.2px;top:665px;width:12.4px;height:12.4px;border:1.2px solid #9a9a9a;border-radius:2.6px;box-sizing:border-box;background:linear-gradient(#f4f4f4,#dcdcdc);"></div>
<div style="left:45.2px;top:670.6px;width:6.4px;height:1.2px;background:#777;"></div>
<div style="left:47.8px;top:668px;width:1.2px;height:6.4px;background:#777;"></div>
<div style="left:62.4px;top:662.6px;width:16.8px;height:16.6px;border:1.2px solid #cdcdcd;border-radius:2px;box-sizing:border-box;background:#fff;"></div>
<div class="t" style="left:84.4px;top:660.72px;height:20.96px;line-height:20.96px;font-size:13.1px;color:#333;">成球盘配电室_66</div>
<div style="left:42.2px;top:690.72px;width:12.4px;height:12.4px;border:1.2px solid #9a9a9a;border-radius:2.6px;box-sizing:border-box;background:linear-gradient(#f4f4f4,#dcdcdc);"></div>
<div style="left:45.2px;top:696.32px;width:6.4px;height:1.2px;background:#777;"></div>
<div style="left:47.8px;top:693.72px;width:1.2px;height:6.4px;background:#777;"></div>
<div style="left:62.4px;top:688.32px;width:16.8px;height:16.6px;border:1.2px solid #cdcdcd;border-radius:2px;box-sizing:border-box;background:#fff;"></div>
<div class="t" style="left:84.4px;top:686.44px;height:20.96px;line-height:20.96px;font-size:13.1px;color:#333;">2#进线_67</div>
<div style="left:42.2px;top:716.45px;width:12.4px;height:12.4px;border:1.2px solid #9a9a9a;border-radius:2.6px;box-sizing:border-box;background:linear-gradient(#f4f4f4,#dcdcdc);"></div>
<div style="left:45.2px;top:722.05px;width:6.4px;height:1.2px;background:#777;"></div>
<div style="left:47.8px;top:719.45px;width:1.2px;height:6.4px;background:#777;"></div>
<div style="left:62.4px;top:714.05px;width:16.8px;height:16.6px;border:1.2px solid #cdcdcd;border-radius:2px;box-sizing:border-box;background:#fff;"></div>
<div class="t" style="left:84.4px;top:712.17px;height:20.96px;line-height:20.96px;font-size:13.1px;color:#333;">生筛电源_68</div>
<div style="left:42.2px;top:742.17px;width:12.4px;height:12.4px;border:1.2px solid #9a9a9a;border-radius:2.6px;box-sizing:border-box;background:linear-gradient(#f4f4f4,#dcdcdc);"></div>
<div style="left:45.2px;top:747.77px;width:6.4px;height:1.2px;background:#777;"></div>
<div style="left:47.8px;top:745.17px;width:1.2px;height:6.4px;background:#777;"></div>
<div style="left:62.4px;top:739.77px;width:16.8px;height:16.6px;border:1.2px solid #cdcdcd;border-radius:2px;box-sizing:border-box;background:#fff;"></div>
<div class="t" style="left:84.4px;top:737.89px;height:20.96px;line-height:20.96px;font-size:13.1px;color:#333;">水泵房电源_69</div>
<div style="left:42.2px;top:767.9px;width:12.4px;height:12.4px;border:1.2px solid #9a9a9a;border-radius:2.6px;box-sizing:border-box;background:linear-gradient(#f4f4f4,#dcdcdc);"></div>
<div style="left:45.2px;top:773.5px;width:6.4px;height:1.2px;background:#777;"></div>
<div style="left:47.8px;top:770.9px;width:1.2px;height:6.4px;background:#777;"></div>
<div style="left:62.4px;top:765.5px;width:16.8px;height:16.6px;border:1.2px solid #cdcdcd;border-radius:2px;box-sizing:border-box;background:#fff;"></div>
<div class="t" style="left:84.4px;top:763.62px;height:20.96px;line-height:20.96px;font-size:13.1px;color:#333;">除尘一电厂_70</div>
<div style="left:42.2px;top:793.62px;width:12.4px;height:12.4px;border:1.2px solid #9a9a9a;border-radius:2.6px;box-sizing:border-box;background:linear-gradient(#f4f4f4,#dcdcdc);"></div>
<div style="left:45.2px;top:799.22px;width:6.4px;height:1.2px;background:#777;"></div>
<div style="left:47.8px;top:796.62px;width:1.2px;height:6.4px;background:#777;"></div>
<div style="left:62.4px;top:791.22px;width:16.8px;height:16.6px;border:1.2px solid #cdcdcd;border-radius:2px;box-sizing:border-box;background:#fff;"></div>
<div class="t" style="left:84.4px;top:789.34px;height:20.96px;line-height:20.96px;font-size:13.1px;color:#333;">除尘低压柜_71</div>
<div style="left:42.2px;top:819.34px;width:12.4px;height:12.4px;border:1.2px solid #9a9a9a;border-radius:2.6px;box-sizing:border-box;background:linear-gradient(#f4f4f4,#dcdcdc);"></div>
<div style="left:45.2px;top:824.94px;width:6.4px;height:1.2px;background:#777;"></div>
<div style="left:47.8px;top:822.34px;width:1.2px;height:6.4px;background:#777;"></div>
<div style="left:62.4px;top:816.94px;width:16.8px;height:16.6px;border:1.2px solid #cdcdcd;border-radius:2px;box-sizing:border-box;background:#fff;"></div>
<div class="t" style="left:84.4px;top:815.06px;height:20.96px;line-height:20.96px;font-size:13.1px;color:#333;">除尘二电厂_72</div>
<div style="left:42.2px;top:845.07px;width:12.4px;height:12.4px;border:1.2px solid #9a9a9a;border-radius:2.6px;box-sizing:border-box;background:linear-gradient(#f4f4f4,#dcdcdc);"></div>
<div style="left:45.2px;top:850.67px;width:6.4px;height:1.2px;background:#777;"></div>
<div style="left:47.8px;top:848.07px;width:1.2px;height:6.4px;background:#777;"></div>
<div style="left:62.4px;top:842.67px;width:16.8px;height:16.6px;border:1.2px solid #cdcdcd;border-radius:2px;box-sizing:border-box;background:#fff;"></div>
<div class="t" style="left:84.4px;top:840.79px;height:20.96px;line-height:20.96px;font-size:13.1px;color:#333;">除尘三电厂_73</div>
<div style="left:42.2px;top:870.79px;width:12.4px;height:12.4px;border:1.2px solid #9a9a9a;border-radius:2.6px;box-sizing:border-box;background:linear-gradient(#f4f4f4,#dcdcdc);"></div>
<div style="left:45.2px;top:876.39px;width:6.4px;height:1.2px;background:#777;"></div>
<div style="left:47.8px;top:873.79px;width:1.2px;height:6.4px;background:#777;"></div>
<div style="left:62.4px;top:868.39px;width:16.8px;height:16.6px;border:1.2px solid #cdcdcd;border-radius:2px;box-sizing:border-box;background:#fff;"></div>
<div class="t" style="left:84.4px;top:866.51px;height:20.96px;line-height:20.96px;font-size:13.1px;color:#333;">助燃风机_74</div>
<div style="left:42.2px;top:896.52px;width:12.4px;height:12.4px;border:1.2px solid #9a9a9a;border-radius:2.6px;box-sizing:border-box;background:linear-gradient(#f4f4f4,#dcdcdc);"></div>
<div style="left:45.2px;top:902.12px;width:6.4px;height:1.2px;background:#777;"></div>
<div style="left:47.8px;top:899.52px;width:1.2px;height:6.4px;background:#777;"></div>
<div style="left:62.4px;top:894.12px;width:16.8px;height:16.6px;border:1.2px solid #cdcdcd;border-radius:2px;box-sizing:border-box;background:#fff;"></div>
<div class="t" style="left:84.4px;top:892.24px;height:20.96px;line-height:20.96px;font-size:13.1px;color:#333;">2#成球盘_75</div>
<div style="left:42.2px;top:922.24px;width:12.4px;height:12.4px;border:1.2px solid #9a9a9a;border-radius:2.6px;box-sizing:border-box;background:linear-gradient(#f4f4f4,#dcdcdc);"></div>
<div style="left:45.2px;top:927.84px;width:6.4px;height:1.2px;background:#777;"></div>
<div style="left:47.8px;top:925.24px;width:1.2px;height:6.4px;background:#777;"></div>
<div style="left:62.4px;top:919.84px;width:16.8px;height:16.6px;border:1.2px solid #cdcdcd;border-radius:2px;box-sizing:border-box;background:#fff;"></div>
<div class="t" style="left:84.4px;top:917.96px;height:20.96px;line-height:20.96px;font-size:13.1px;color:#333;">3#成球盘_76</div>
<div style="left:42.2px;top:947.96px;width:12.4px;height:12.4px;border:1.2px solid #9a9a9a;border-radius:2.6px;box-sizing:border-box;background:linear-gradient(#f4f4f4,#dcdcdc);"></div>
<div style="left:45.2px;top:953.56px;width:6.4px;height:1.2px;background:#777;"></div>
<div style="left:47.8px;top:950.96px;width:1.2px;height:6.4px;background:#777;"></div>
<div style="left:62.4px;top:945.56px;width:16.8px;height:16.6px;border:1.2px solid #cdcdcd;border-radius:2px;box-sizing:border-box;background:#fff;"></div>
<div class="t" style="left:84.4px;top:943.68px;height:20.96px;line-height:20.96px;font-size:13.1px;color:#333;">II段进线_11</div>
<div style="left:42.2px;top:973.69px;width:12.4px;height:12.4px;border:1.2px solid #9a9a9a;border-radius:2.6px;box-sizing:border-box;background:linear-gradient(#f4f4f4,#dcdcdc);"></div>
<div style="left:45.2px;top:979.29px;width:6.4px;height:1.2px;background:#777;"></div>
<div style="left:47.8px;top:976.69px;width:1.2px;height:6.4px;background:#777;"></div>
<div style="left:62.4px;top:971.29px;width:16.8px;height:16.6px;border:1.2px solid #cdcdcd;border-radius:2px;box-sizing:border-box;background:#fff;"></div>
<div class="t" style="left:84.4px;top:969.41px;height:20.96px;line-height:20.96px;font-size:13.1px;color:#333;">I段进线_12</div>
</div>
<div style="left:588.6px;top:133.2px;width:1511.2px;height:119.4px;border:1.1px solid #ececec;box-sizing:border-box;background:#fff;"></div>
<div class="t" style="left:-125.4px;width:800px;text-align:right;top:160.4px;height:21.6px;line-height:21.6px;font-size:13.5px;color:#333;">参数</div>
<div class="t" style="left:681.2px;top:160px;height:21.6px;line-height:21.6px;font-size:13.5px;color:#333;">:</div>
<div class="t" style="left:-125.4px;width:800px;text-align:right;top:203.8px;height:21.6px;line-height:21.6px;font-size:13.5px;color:#333;">分析时间</div>
<div class="t" style="left:681.2px;top:203.4px;height:21.6px;line-height:21.6px;font-size:13.5px;color:#333;">:</div>
<div class="t" style="left:138.8px;width:800px;text-align:right;top:160.4px;height:21.6px;line-height:21.6px;font-size:13.5px;color:#333;">分析变量</div>
<div class="t" style="left:945.4px;top:160px;height:21.6px;line-height:21.6px;font-size:13.5px;color:#333;">:</div>
<div class="t" style="left:138.8px;width:800px;text-align:right;top:203.8px;height:21.6px;line-height:21.6px;font-size:13.5px;color:#333;">对比时间</div>
<div class="t" style="left:945.4px;top:203.4px;height:21.6px;line-height:21.6px;font-size:13.5px;color:#333;">:</div>
<div class="t" style="left:371.6px;width:800px;text-align:right;top:203.8px;height:21.6px;line-height:21.6px;font-size:13.5px;color:#333;">阈值</div>
<div class="t" style="left:1178.2px;top:203.4px;height:21.6px;line-height:21.6px;font-size:13.5px;color:#333;">:</div>
<div style="left:688.8px;top:154.2px;width:154.2px;height:32.8px;border:1.2px solid #cfcfcf;border-radius:4px;box-sizing:border-box;background:#fff;"></div>
<div class="t" style="left:700.8px;top:160.6px;height:20.8px;line-height:20.8px;font-size:13px;color:#333;">有功功率</div>
<svg style="left:826px;top:168.4px;width:10.6px;height:6px;" viewBox="0 0 10 6" preserveAspectRatio="none"><path d="M0 0 H10 L5 6Z" fill="#555"/></svg>
<div style="left:953.2px;top:154.2px;width:154px;height:32.8px;border:1.2px solid #cfcfcf;border-radius:4px;box-sizing:border-box;background:#fff;"></div>
<div class="t" style="left:964.6px;top:160.6px;height:20.8px;line-height:20.8px;font-size:13px;color:#333;">日分析</div>
<svg style="left:1089px;top:168.4px;width:10.6px;height:6px;" viewBox="0 0 10 6" preserveAspectRatio="none"><path d="M0 0 H10 L5 6Z" fill="#555"/></svg>
<div style="left:688.8px;top:198.4px;width:154.2px;height:32.4px;border:1.2px solid #cfcfcf;border-radius:4px;box-sizing:border-box;background:#fff;"></div>
<div class="t" style="left:700.8px;top:203.4px;height:22.4px;line-height:22.4px;font-size:14px;color:#333;">2018-06-10</div>
<svg style="left:821.6px;top:206px;width:16.2px;height:15.6px;" viewBox="0 0 22 21" preserveAspectRatio="none"><g fill="none" stroke="#9a9a9a" stroke-width="1.4"><rect x="1.5" y="3.5" width="19" height="16"/><path d="M1.5 8.5 H20.5" stroke-width="2.4"/><path d="M6 1 V5 M16 1 V5 M6.5 11 V19 M11 11 V19 M15.5 11 V19 M1.5 13.5 H20.5 M1.5 16.5 H20.5" stroke-width="1"/></g></svg>
<div style="left:953.2px;top:198.4px;width:154px;height:32.4px;border:1.2px solid #cfcfcf;border-radius:4px;box-sizing:border-box;background:#fff;"></div>
<div class="t" style="left:964.6px;top:203.4px;height:22.4px;line-height:22.4px;font-size:14px;color:#333;">2019-01-15</div>
<svg style="left:1086.2px;top:206px;width:16.2px;height:15.6px;" viewBox="0 0 22 21" preserveAspectRatio="none"><g fill="none" stroke="#9a9a9a" stroke-width="1.4"><rect x="1.5" y="3.5" width="19" height="16"/><path d="M1.5 8.5 H20.5" stroke-width="2.4"/><path d="M6 1 V5 M16 1 V5 M6.5 11 V19 M11 11 V19 M15.5 11 V19 M1.5 13.5 H20.5 M1.5 16.5 H20.5" stroke-width="1"/></g></svg>
<div style="left:1186.4px;top:198.4px;width:73.6px;height:32.4px;border:1.2px solid #cfcfcf;border-radius:4px;box-sizing:border-box;background:#fff;"></div>
<div class="t" style="left:1198.4px;top:203.4px;height:22.4px;line-height:22.4px;font-size:14px;color:#333;">20</div>
<div class="t" style="left:1264.6px;top:202.8px;height:22.4px;line-height:22.4px;font-size:14px;color:#333;">%</div>
<div style="left:1925.8px;top:175.4px;width:73.8px;height:34.4px;background:#28a23a;border-radius:4px;"></div>
<svg style="left:1937.8px;top:186.8px;width:12.8px;height:14.4px;color:#fff;" viewBox="1 1 22.5 23" preserveAspectRatio="none"><g fill="none" stroke="currentColor" stroke-width="2.3" stroke-linecap="round" stroke-linejoin="round"><circle cx="10.5" cy="10.5" r="8"/><path d="M16.5 16.8 L21.8 22.3"/></g></svg>
<div class="t" style="left:1953.2px;top:184.24px;height:19.52px;line-height:19.52px;font-size:12.2px;color:#fff;font-weight:bold;letter-spacing:9px;">查询</div>
<div style="left:2010.6px;top:176.4px;width:73px;height:32.8px;background:#fff;border:1.2px solid #cfcfcf;border-radius:4px;box-sizing:border-box;"></div>
<svg style="left:2018px;top:185.2px;width:19.6px;height:16.8px;color:#555;" viewBox="0 0 24 24" preserveAspectRatio="none"><g fill="none" stroke="currentColor" stroke-width="1.6" stroke-linecap="round" stroke-linejoin="round"><path d="M14 3 H2 V21 H17 V13"/><path d="M6 9 H10 V15 H6Z" stroke-width="1.4"/><path d="M13 9 L21 3 M17 2.5 H21.5 V7"/></g></svg>
<div class="t" style="left:2043px;top:183.84px;height:19.52px;line-height:19.52px;font-size:12.2px;color:#222;font-weight:bold;letter-spacing:8px;">导出</div>
<div style="left:588.6px;top:268.6px;width:1511.2px;height:116.8px;border:1.1px solid #ececec;box-sizing:border-box;background:#fff;"></div>
<div style="left:588.6px;top:268.6px;width:1511.2px;height:42px;background:#e4e4e4;"></div>
<svg style="left:602px;top:283.4px;width:14.8px;height:15.6px;color:#3a3a3a;" viewBox="1.5 2 20.5 22" preserveAspectRatio="none"><g fill="none" stroke="currentColor" stroke-width="2.2" stroke-linecap="round" stroke-linejoin="round"><path d="M15.5 3 L20.5 8 L9 19.5 L3.5 20.5 L4.5 15Z"/><path d="M2.5 23 H17"/></g></svg>
<div class="t" style="left:619.8px;top:279px;height:23.2px;line-height:23.2px;font-size:14.5px;color:#333;">分析诊断结论</div>
<div style="left:1925.8px;top:274px;width:73.8px;height:31.8px;background:#28a23a;border-radius:4px;"></div>
<svg style="left:1935px;top:281.2px;width:15.6px;height:16.8px;color:#fff;" viewBox="1 1 22 22" preserveAspectRatio="none"><g fill="none" stroke="currentColor" stroke-width="2.4" stroke-linecap="round" stroke-linejoin="round"><path d="M20 12 V21.5 H2.5 V4 H14"/><path d="M7 10 L11.5 15.5 L21.5 2.5"/></g></svg>
<div class="t" style="left:1958px;top:280.24px;height:19.52px;line-height:19.52px;font-size:12.2px;color:#fff;font-weight:bold;letter-spacing:8.4px;">保存</div>
<svg style="left:2035px;top:282.4px;width:15.2px;height:15.2px;color:#444;" viewBox="0 0 24 24" preserveAspectRatio="none"><g fill="none" stroke="currentColor" stroke-width="1.7" stroke-linecap="round" stroke-linejoin="round"><circle cx="12" cy="12" r="10"/><path d="M7 10 L12 15 L17 10"/></g></svg>
<div class="t" style="left:2056px;top:278.64px;height:22.72px;line-height:22.72px;font-size:14.2px;color:#333;">收缩</div>
<div style="left:626.2px;top:327.8px;width:1457.8px;height:39.6px;border:1.2px solid #d9d9d9;border-left:3.2px solid #2e9b3c;box-sizing:border-box;background:#fff;box-shadow:0 1px 2px rgba(0,0,0,.12);"></div>
<svg style="left:613.6px;top:338.8px;width:13px;height:17.2px;" viewBox="0 0 10 12" preserveAspectRatio="none"><path d="M10 0 V12 L0 6Z" fill="#2e9b3c"/></svg>
<div class="t" style="left:639.6px;top:336.88px;height:22.24px;line-height:22.24px;font-size:13.9px;color:#333;">请选择分析对象</div>
<div class="t" style="left:741.2px;top:336.88px;height:22.24px;line-height:22.24px;font-size:13.9px;color:#333;">!</div>
<div style="left:588.6px;top:400.6px;width:1511.2px;height:441.8px;border:1.1px solid #ececec;box-sizing:border-box;background:#fff;"></div>
<div style="left:588.6px;top:400.6px;width:1511.2px;height:43px;background:#e4e4e4;"></div>
<svg style="left:600.6px;top:414px;width:14.4px;height:14.6px;color:#4a4a4a;" viewBox="2 2 20 20.5" preserveAspectRatio="none"><g fill="none" stroke="currentColor" stroke-width="2.1" stroke-linecap="round" stroke-linejoin="round"><path d="M12 3 L21 8 L12 13 L3 8Z"/><path d="M3 12.5 L12 17.5 L21 12.5 M3 16.5 L12 21.5 L21 16.5"/></g></svg>
<div class="t" style="left:619.8px;top:410.32px;height:23.36px;line-height:23.36px;font-size:14.6px;color:#333;">分析详情</div>
<svg style="left:2008.4px;top:460px;width:29.4px;height:26px;color:#3a9ff0;" viewBox="0 0 24 21" preserveAspectRatio="none"><g fill="none" stroke="currentColor" stroke-width="2" stroke-linecap="round" stroke-linejoin="round"><path d="M1.5 1 V19.5 H23.5" stroke-width="2.2"/><path d="M4.5 14.5 C6 -2 10 -2 13 8 S 19 19 22 10"/></g></svg>
<svg style="left:2055.8px;top:460.4px;width:26.4px;height:25.2px;color:#999;" viewBox="0 0 24 23" preserveAspectRatio="none"><g fill="none" stroke="currentColor" stroke-width="1.9" stroke-linecap="round" stroke-linejoin="round"><rect x="1" y="1" width="22" height="21"/><path d="M8.3 1 V22 M15.6 1 V22 M1 8 H23 M1 15 H23"/></g></svg>
<div style="left:608.2px;top:502.6px;width:1472.4px;height:336px;border:1.2px solid #cdcdcd;box-sizing:border-box;background:#fff;box-shadow:0 0.8px 2.4px rgba(0,0,0,.18);"></div>
<div style="left:609.2px;top:503.6px;width:1470.4px;height:34px;background:#e3e3e3;"></div>
<svg style="left:608.2px;top:502.2px;width:1472.4px;height:336.4px;" viewBox="0 0 736.2 168.2" preserveAspectRatio="none"><path d="M18.4 32.1C20.4 32.1 25.0 31.4 30.6 32.2C36.2 33.0 44.9 34.9 52.0 36.7C59.1 38.5 66.3 40.5 73.4 42.8C80.5 45.1 87.7 47.9 94.8 50.4C101.9 52.9 107.4 54.5 115.9 57.9C124.4 61.3 136.2 66.5 145.9 70.9C155.6 75.3 167.0 82.7 174.2 84.0C181.4 85.3 183.8 81.2 188.9 78.9C194.0 76.6 199.6 73.6 204.8 70.3C210.0 67.0 214.8 62.7 219.9 58.9C225.0 55.1 231.8 50.1 235.3 47.4C238.8 44.7 237.4 45.3 240.9 42.8C244.4 40.3 251.1 34.8 256.2 32.5C261.3 30.2 266.4 28.8 271.5 29.0C276.6 29.2 281.6 30.3 286.7 33.6C291.8 36.9 296.9 42.5 302.0 48.9C307.1 55.3 312.7 65.4 317.3 71.8C321.9 78.2 324.7 83.1 329.5 87.1C334.3 91.1 340.3 93.6 345.9 95.9C351.5 98.2 357.7 101.5 363.1 100.8C368.5 100.1 373.3 95.8 378.4 91.7C383.5 87.6 388.6 81.0 393.7 76.4C398.8 71.8 403.8 67.3 408.9 64.2C414.0 61.2 419.1 59.3 424.2 58.1C429.3 56.9 434.4 56.8 439.5 57.1C444.6 57.3 449.7 58.2 454.8 59.6C459.9 61.0 464.9 63.3 470.0 65.7C475.1 68.1 479.3 70.1 485.3 73.9C491.3 77.7 500.2 83.3 506.2 88.6C512.2 93.8 516.9 101.9 521.5 105.4C526.1 108.9 529.6 109.7 533.7 109.4C537.8 109.2 541.3 107.4 545.9 103.9C550.5 100.4 556.1 92.8 561.2 88.6C566.3 84.4 572.8 80.7 576.4 78.9C580.0 77.1 580.1 77.6 582.6 77.9C585.1 78.2 588.1 78.9 591.7 80.9C595.2 82.9 600.3 87.5 603.9 90.1C607.5 92.7 609.3 95.3 613.1 96.3C616.9 97.3 622.8 99.6 626.9 96.3C631.0 93.0 634.3 81.8 637.6 76.4C640.9 71.1 643.6 67.0 646.7 64.2C649.7 61.4 652.8 59.7 655.9 59.6C659.0 59.5 662.1 60.8 665.1 63.6C668.1 66.4 670.6 70.2 674.2 76.4C677.7 82.6 682.3 92.1 686.4 100.8C690.5 109.4 695.6 122.2 698.7 128.3C701.8 134.4 700.2 132.6 704.8 137.5C709.4 142.5 722.6 154.6 726.2 158.0L726.2 158.0L18.4 158.0Z" fill="#e2e7ec"/><path d="M18.4 83.1C21.4 81.2 28.5 76.0 36.7 71.8C44.8 67.6 58.1 61.2 67.3 58.1C76.5 54.9 85.1 53.8 91.7 52.9C98.3 52.0 100.9 52.0 107.0 52.6C113.1 53.2 121.3 54.1 128.4 56.5C135.5 58.9 142.2 62.4 149.8 67.2C157.4 72.1 166.0 79.7 174.2 85.6C182.3 91.5 191.0 98.7 198.7 102.4C206.3 106.1 214.0 107.1 220.1 107.6C226.2 108.1 230.2 107.0 235.3 105.4C240.4 103.8 247.4 99.8 250.9 97.8C254.4 95.8 252.8 95.0 256.2 93.2C259.6 91.4 266.4 88.8 271.5 87.1C276.6 85.4 281.6 84.0 286.7 83.1C291.8 82.2 296.9 81.8 302.0 81.9C307.1 82.1 312.2 82.9 317.3 84.0C322.4 85.1 327.5 86.5 332.6 88.6C337.7 90.6 342.7 94.2 347.8 96.3C352.9 98.4 359.0 100.7 363.1 101.4C367.2 102.2 368.2 101.9 372.3 100.8C376.4 99.7 382.5 97.0 387.6 94.7C392.7 92.4 396.7 90.0 402.8 87.1C408.9 84.1 418.1 79.4 424.2 77.0C430.3 74.6 434.4 73.6 439.5 72.7C444.6 71.8 449.7 71.6 454.8 71.8C459.9 72.0 464.9 72.6 470.0 73.9C475.1 75.2 479.3 76.4 485.3 79.4C491.3 82.4 500.2 87.0 506.2 92.1C512.2 97.2 517.4 105.2 521.5 110.0C525.6 114.8 527.6 118.3 530.6 120.7C533.6 123.2 536.2 124.2 539.8 124.7C543.4 125.2 547.4 125.1 552.0 123.7C556.6 122.3 562.2 118.9 567.3 116.1C572.4 113.3 577.5 109.7 582.6 106.9C587.7 104.1 592.7 101.1 597.8 99.3C602.9 97.5 608.5 96.9 613.1 96.3C617.7 95.7 620.7 95.3 625.3 95.6C629.9 95.8 635.5 96.4 640.6 97.8C645.7 99.2 650.3 101.1 655.9 103.9C661.5 106.7 668.6 110.8 674.2 114.6C679.8 118.4 684.4 122.7 689.5 126.8C694.6 130.9 698.7 133.8 704.8 139.0C710.9 144.2 722.6 154.8 726.2 158.0L726.2 158.0L18.4 158.0Z" fill="#d1d9e0"/><text transform="translate(274.1,145.2) scale(1.86,1)" font-size="23" font-weight="500" fill="#a9b4bf" style="letter-spacing:8.8px" font-family="Liberation Sans,Noto Sans CJK SC,sans-serif">暂无数据</text></svg>
<div style="left:588.6px;top:856.4px;width:1511.2px;height:262.8px;border:1.1px solid #ececec;box-sizing:border-box;background:#fff;"></div>
<div style="left:588.6px;top:856.4px;width:1511.2px;height:41.4px;background:#e4e4e4;"></div>
<svg style="left:600.4px;top:870.8px;width:15.2px;height:14.8px;color:#444;" viewBox="0.5 0.5 23 23" preserveAspectRatio="none"><g fill="none" stroke="currentColor" stroke-width="2" stroke-linecap="round" stroke-linejoin="round"><rect x="1.5" y="1.5" width="21" height="21"/><path d="M1.5 7 H22.5 M1.5 12 H22.5 M1.5 17 H22.5 M8 7 V22.5"/></g></svg>
<div class="t" style="left:621.8px;top:866.52px;height:23.36px;line-height:23.36px;font-size:14.6px;color:#333;">保存的结论记录</div>
<div style="left:606.4px;top:911.4px;width:71.4px;height:32px;border:1.2px solid #dcdcdc;border-radius:3.2px;box-sizing:border-box;background:#fff;"></div>
<svg style="left:618.2px;top:921px;width:14.4px;height:14.4px;color:#444;" viewBox="1 1 22 22" preserveAspectRatio="none"><g fill="none" stroke="currentColor" stroke-width="2" stroke-linecap="round" stroke-linejoin="round"><circle cx="12" cy="12" r="10"/><path d="M8 8 L16 16 M16 8 L8 16"/></g></svg>
<div class="t" style="left:641.2px;top:916.68px;height:23.04px;line-height:23.04px;font-size:14.4px;color:#333;">删除</div>
<div style="left:605.4px;top:956.2px;width:1481.2px;height:39.2px;background:#2196f3;"></div>
<div style="left:932.6px;top:956.2px;width:1.2px;height:39.2px;background:#7fc1f8;"></div>
<div style="left:1220.8px;top:956.2px;width:1.2px;height:39.2px;background:#7fc1f8;"></div>
<div style="left:1943.4px;top:956.2px;width:1.2px;height:39.2px;background:#7fc1f8;"></div>
<div class="t" style="left:609.6px;top:963.64px;height:24.32px;line-height:24.32px;font-size:15.2px;color:#ddeefd;font-weight:bold;">序号</div>
<div class="t" style="left:389.6px;width:800px;text-align:center;top:963.48px;height:24.64px;line-height:24.64px;font-size:15.4px;color:#ddeefd;font-weight:bold;">对象名称</div>
<div class="t" style="left:677.2px;width:800px;text-align:center;top:963.48px;height:24.64px;line-height:24.64px;font-size:15.4px;color:#ddeefd;font-weight:bold;">保存时间</div>
<div class="t" style="left:1182.6px;width:800px;text-align:center;top:963.48px;height:24.64px;line-height:24.64px;font-size:15.4px;color:#ddeefd;font-weight:bold;">结论描述</div>
<div class="t" style="left:1615.2px;width:800px;text-align:center;top:963.48px;height:24.64px;line-height:24.64px;font-size:15.4px;color:#ddeefd;font-weight:bold;">详情</div>
<div style="left:605.4px;top:995.4px;width:1481.2px;height:31.6px;background:#fafafa;"></div>
<div style="left:605.4px;top:1026.4px;width:1481.2px;height:1.2px;background:#dedede;"></div>
<div class="t" style="left:623.2px;top:1001.24px;height:21.12px;line-height:21.12px;font-size:13.2px;color:#222;">1</div>
<div class="t" style="left:656.4px;top:1002.2px;height:19.2px;line-height:19.2px;font-size:12px;color:#333;">3#冷却风机_2</div>
<div class="t" style="left:677.8px;width:800px;text-align:center;top:1002.04px;height:19.52px;line-height:19.52px;font-size:12.2px;color:#333;">2021-04-13 14:03:16</div>
<div class="t" style="left:1233px;top:1001.93px;height:19.74px;line-height:19.74px;font-size:12.34px;color:#333;white-space:pre;">3#冷却风机_2 2021-03-13相对2021-04-13三相有功功率差 / kW ，差值与运行值比为 / %</div>
<svg style="left:2006.8px;top:1005.2px;width:16px;height:13.6px;color:#333;" viewBox="1 1 23 19" preserveAspectRatio="none"><g fill="none" stroke="currentColor" stroke-width="2.3" stroke-linecap="round" stroke-linejoin="round"><circle cx="9" cy="9" r="7"/><path d="M14 14.5 L18 19"/><path d="M19.5 5.5 H23.5 M19.5 10.5 H23.5 M20.5 15.5 H23.5" stroke-width="2"/></g></svg>
<div style="left:605.4px;top:1058.2px;width:1481.2px;height:1.2px;background:#dedede;"></div>
<div class="t" style="left:623.2px;top:1032.94px;height:21.12px;line-height:21.12px;font-size:13.2px;color:#222;">2</div>
<div class="t" style="left:656.4px;top:1033.9px;height:19.2px;line-height:19.2px;font-size:12px;color:#333;">3#冷却风机_2</div>
<div class="t" style="left:677.8px;width:800px;text-align:center;top:1033.74px;height:19.52px;line-height:19.52px;font-size:12.2px;color:#333;">2021-04-13 14:03:16</div>
<div class="t" style="left:1233px;top:1033.63px;height:19.74px;line-height:19.74px;font-size:12.34px;color:#333;white-space:pre;">3#冷却风机_2 2021-03-13相对2021-04-13A相电流差 / A ，差值与运行值比为 / %</div>
<svg style="left:2006.8px;top:1036.9px;width:16px;height:13.6px;color:#333;" viewBox="1 1 23 19" preserveAspectRatio="none"><g fill="none" stroke="currentColor" stroke-width="2.3" stroke-linecap="round" stroke-linejoin="round"><circle cx="9" cy="9" r="7"/><path d="M14 14.5 L18 19"/><path d="M19.5 5.5 H23.5 M19.5 10.5 H23.5 M20.5 15.5 H23.5" stroke-width="2"/></g></svg>
<div style="left:604.8px;top:995.4px;width:1.2px;height:63.4px;background:#dedede;"></div>
<div style="left:932.6px;top:995.4px;width:1.2px;height:63.4px;background:#dedede;"></div>
<div style="left:1220.8px;top:995.4px;width:1.2px;height:63.4px;background:#dedede;"></div>
<div style="left:1943.4px;top:995.4px;width:1.2px;height:63.4px;background:#dedede;"></div>
<div style="left:2086px;top:995.4px;width:1.2px;height:63.4px;background:#dedede;"></div>
<div style="left:604.8px;top:1058.8px;width:1.2px;height:60px;background:#dedede;"></div>
<div style="left:605.4px;top:1077.8px;width:1481.2px;height:41px;background:#f2f2f2;"></div>
<div class="t" style="left:620.8px;top:1090.8px;height:20.8px;line-height:20.8px;font-size:13px;color:#222;">共 2 条记录</div>
<div style="left:1819px;top:1087.4px;width:23.6px;height:23.8px;border:1.2px solid #c9c9c9;border-radius:2px;box-sizing:border-box;background:#f4f4f4;"></div>
<svg style="left:1822.8px;top:1091.2px;width:16px;height:16.2px;color:#222;" viewBox="0 0 24 24" preserveAspectRatio="none"><g fill="none" stroke="currentColor" stroke-width="2.4" stroke-linecap="round" stroke-linejoin="round"><path d="M16 5 V19 L7 12Z" fill="currentColor" stroke-width="1"/></g></svg>
<div style="left:1851px;top:1087.4px;width:23.6px;height:23.8px;border:1.2px solid #c9c9c9;border-radius:2px;box-sizing:border-box;background:#f4f4f4;"></div>
<svg style="left:1854.8px;top:1091.2px;width:16px;height:16.2px;color:#222;" viewBox="0 0 24 24" preserveAspectRatio="none"><g fill="none" stroke="currentColor" stroke-width="2.4" stroke-linecap="round" stroke-linejoin="round"><path d="M15.5 4 L8 12 L15.5 20"/></g></svg>
<div class="t" style="left:1883px;top:1089.16px;height:20.48px;line-height:20.48px;font-size:12.8px;color:#333;">第</div>
<div style="left:1901.4px;top:1087.4px;width:28px;height:23.8px;border:1.2px solid #c9c9c9;box-sizing:border-box;background:#fff;"></div>
<div class="t" style="left:1514.8px;width:800px;text-align:center;top:1089.16px;height:20.48px;line-height:20.48px;font-size:12.8px;color:#222;">1</div>
<div class="t" style="left:1939.6px;top:1089.16px;height:20.48px;line-height:20.48px;font-size:12.8px;color:#333;">共</div>
<div class="t" style="left:1564.6px;width:800px;text-align:center;top:1089.16px;height:20.48px;line-height:20.48px;font-size:12.8px;color:#333;">1</div>
<div class="t" style="left:1977.8px;top:1089.16px;height:20.48px;line-height:20.48px;font-size:12.8px;color:#333;">页</div>
<div style="left:1995px;top:1087.4px;width:26.2px;height:23.8px;border:1.2px solid #c9c9c9;border-radius:2px;box-sizing:border-box;background:#f4f4f4;"></div>
<svg style="left:2000.1px;top:1091.2px;width:16px;height:16.2px;color:#222;" viewBox="0 0 24 24" preserveAspectRatio="none"><g fill="none" stroke="currentColor" stroke-width="2.4" stroke-linecap="round" stroke-linejoin="round"><path d="M8.5 4 L16 12 L8.5 20"/></g></svg>
<div style="left:2025.2px;top:1087.4px;width:26px;height:23.8px;border:1.2px solid #c9c9c9;border-radius:2px;box-sizing:border-box;background:#f4f4f4;"></div>
<svg style="left:2030.2px;top:1091.2px;width:16px;height:16.2px;color:#222;" viewBox="0 0 24 24" preserveAspectRatio="none"><g fill="none" stroke="currentColor" stroke-width="2.4" stroke-linecap="round" stroke-linejoin="round"><path d="M8 5 V19 L17 12Z" fill="currentColor" stroke-width="1"/></g></svg>
<div style="left:2056.6px;top:1087.4px;width:25px;height:23.8px;border:1.2px solid #c9c9c9;border-radius:2px;box-sizing:border-box;background:#f4f4f4;"></div>
<svg style="left:2061.1px;top:1091.2px;width:16px;height:16.2px;color:#222;" viewBox="0 0 24 24" preserveAspectRatio="none"><g fill="none" stroke="currentColor" stroke-width="2.4" stroke-linecap="round" stroke-linejoin="round"><path d="M19 8 A8.5 8.5 0 1 0 20.5 13"/><path d="M14 2.5 L19.5 8 L13 9.5" /></g></svg>
<div style="left:0px;top:0px;width:2.2px;height:1178px;background:#000;"></div>
<div style="left:2114.6px;top:0px;width:5.4px;height:1178px;background:#000;"></div>
<div style="left:0px;top:1173.6px;width:2120px;height:4.4px;background:#000;"></div>
</div>
</body></html>
